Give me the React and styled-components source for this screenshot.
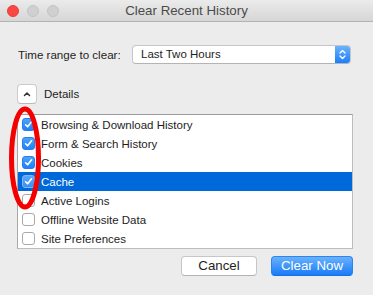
import React from "react";
import styled, { createGlobalStyle } from "styled-components";

const Global = createGlobalStyle`
  html, body { margin: 0; padding: 0; background: #ececec; }
  * { box-sizing: border-box; }
`;

const Window = styled.div`
  position: relative;
  width: 373px;
  height: 295px;
  background: #ececec;
  font-family: "Liberation Sans", Arial, sans-serif;
  color: #1e1e1e;
  overflow: hidden;
`;

const TitleBar = styled.div`
  height: 22px;
  display: flex;
  align-items: center;
  padding-left: 7px;
  background: linear-gradient(#ebebeb, #d6d6d6);
  border-bottom: 1px solid #b3b3b3;
  position: relative;
`;

const Light = styled.span`
  width: 12px;
  height: 12px;
  border-radius: 50%;
  margin-right: 8px;
  background: ${(p) => (p.$red ? "#fc4641" : "#d0d0d0")};
  border: 1px solid ${(p) => (p.$red ? "#e2413b" : "#c3c3c3")};
`;

const Title = styled.div`
  position: absolute;
  left: 0;
  right: 0;
  text-align: center;
  font-size: 13.3px;
  color: #4b4b4b;
  pointer-events: none;
  line-height: 22px;
`;

const Content = styled.div`
  padding: 23px 20px 0 17px;
  display: flex;
  flex-direction: column;
`;

const RangeRow = styled.div`
  display: flex;
  align-items: center;
  height: 19px;
  font-size: 11.6px;
`;

const Label = styled.span`
  margin-left: 1px;
  width: 114px;
`;

const Select = styled.div`
  flex: 1;
  height: 19px;
  margin-right: 2px;
  display: flex;
  background: #fff;
  border: 1px solid #c6c6c6;
  border-bottom-color: #b4b4b4;
  border-radius: 4px;
  overflow: hidden;
  font-size: 11.5px;
`;

const SelectValue = styled.span`
  flex: 1;
  padding-left: 8px;
  line-height: 17px;
`;

const Stepper = styled.span`
  width: 15px;
  display: flex;
  align-items: center;
  justify-content: center;
  background: linear-gradient(#6bb2fb, #1b7ffa);
`;

const DetailsRow = styled.div`
  display: flex;
  align-items: center;
  margin-top: 20px;
  height: 20px;
  font-size: 11.5px;
`;

const Disclosure = styled.div`
  width: 20px;
  height: 20px;
  border-radius: 4px;
  background: #fff;
  border: 1px solid #cbcbcb;
  border-bottom-color: #b9b9b9;
  display: flex;
  align-items: center;
  justify-content: center;
  margin-right: 7px;
`;

const List = styled.div`
  margin-top: 10px;
  width: 336px;
  background: #fff;
  border: 1px solid #bdbdbd;
  border-top-color: #9c9c9c;
  border-left-color: #a8a8a8;
  display: flex;
  flex-direction: column;
`;

const Row = styled.div`
  height: 19px;
  display: flex;
  align-items: center;
  padding-left: 4px;
  font-size: 11.5px;
  background: ${(p) => (p.$selected ? "#0069d9" : "transparent")};
  color: ${(p) => (p.$selected ? "#fff" : "#1e1e1e")};
`;

const Box = styled.span`
  width: 13px;
  height: 13px;
  border-radius: 3px;
  margin-right: 6px;
  display: flex;
  align-items: center;
  justify-content: center;
  background: ${(p) =>
    p.$checked
      ? p.$selected
        ? "linear-gradient(#5aa6fb, #3a8ff8)"
        : "linear-gradient(#4da2fc, #1f80f9)"
      : "#fff"};
  border: 1px solid
    ${(p) => (p.$checked ? (p.$selected ? "#7fb6f5" : "#2a7fe6") : "#a9a9a9")};
`;

const Buttons = styled.div`
  display: flex;
  justify-content: flex-end;
  gap: 14px;
  margin-top: 7px;
`;

const Button = styled.button`
  height: 20px;
  width: ${(p) => p.$w}px;
  border-radius: 4px;
  font-family: "Liberation Sans", Arial, sans-serif;
  font-size: 13.3px;
  padding: 0;
  line-height: 18px;
  color: ${(p) => (p.$primary ? "#fff" : "#1e1e1e")};
  background: ${(p) =>
    p.$primary ? "linear-gradient(#6ab1fb, #187cf9)" : "#fff"};
  border: 1px solid ${(p) => (p.$primary ? "#2d86f0" : "#c6c6c6")};
  border-bottom-color: ${(p) => (p.$primary ? "#1a6fe0" : "#b2b2b2")};
`;

const Annotation = styled.svg`
  position: absolute;
  left: 0;
  top: 0;
  pointer-events: none;
`;

const Check = () => (
  <svg width="9" height="9" viewBox="0 0 9 9">
    <path d="M1.6 4.8 L3.6 6.8 L7.6 1.8" fill="none" stroke="#fff" strokeWidth="1.6" strokeLinecap="round" strokeLinejoin="round" />
  </svg>
);

const items = [
  { label: "Browsing & Download History", checked: true },
  { label: "Form & Search History", checked: true },
  { label: "Cookies", checked: true },
  { label: "Cache", checked: true, selected: true },
  { label: "Active Logins", checked: false },
  { label: "Offline Website Data", checked: false },
  { label: "Site Preferences", checked: false },
];

export default function App() {
  return (
    <>
      <Global />
      <Window>
        <TitleBar>
          <Light $red />
          <Light />
          <Light />
          <Title>Clear Recent History</Title>
        </TitleBar>
        <Content>
          <RangeRow>
            <Label>Time range to clear:</Label>
            <Select>
              <SelectValue>Last Two Hours</SelectValue>
              <Stepper>
                <svg width="9" height="13" viewBox="0 0 9 13">
                  <path d="M2 5 L4.5 2.5 L7 5 M2 8 L4.5 10.5 L7 8" fill="none" stroke="#fff" strokeWidth="1.4" strokeLinecap="round" strokeLinejoin="round" />
                </svg>
              </Stepper>
            </Select>
          </RangeRow>
          <DetailsRow>
            <Disclosure>
              <svg width="10" height="8" viewBox="0 0 10 8">
                <path d="M2.5 5.5 L5 3 L7.5 5.5" fill="none" stroke="#333" strokeWidth="1.5" strokeLinecap="round" strokeLinejoin="round" />
              </svg>
            </Disclosure>
            <span>Details</span>
          </DetailsRow>
          <List>
            {items.map((it) => (
              <Row key={it.label} $selected={it.selected}>
                <Box $checked={it.checked} $selected={it.selected}>
                  {it.checked && <Check />}
                </Box>
                {it.label}
              </Row>
            ))}
          </List>
          <Buttons>
            <Button $w={76}>Cancel</Button>
            <Button $w={82} $primary>Clear Now</Button>
          </Buttons>
        </Content>
        <Annotation width="373" height="295">
          <ellipse cx="25" cy="158" rx="13.5" ry="49" fill="none" stroke="#f40000" strokeWidth="5" />
        </Annotation>
      </Window>
    </>
  );
}
